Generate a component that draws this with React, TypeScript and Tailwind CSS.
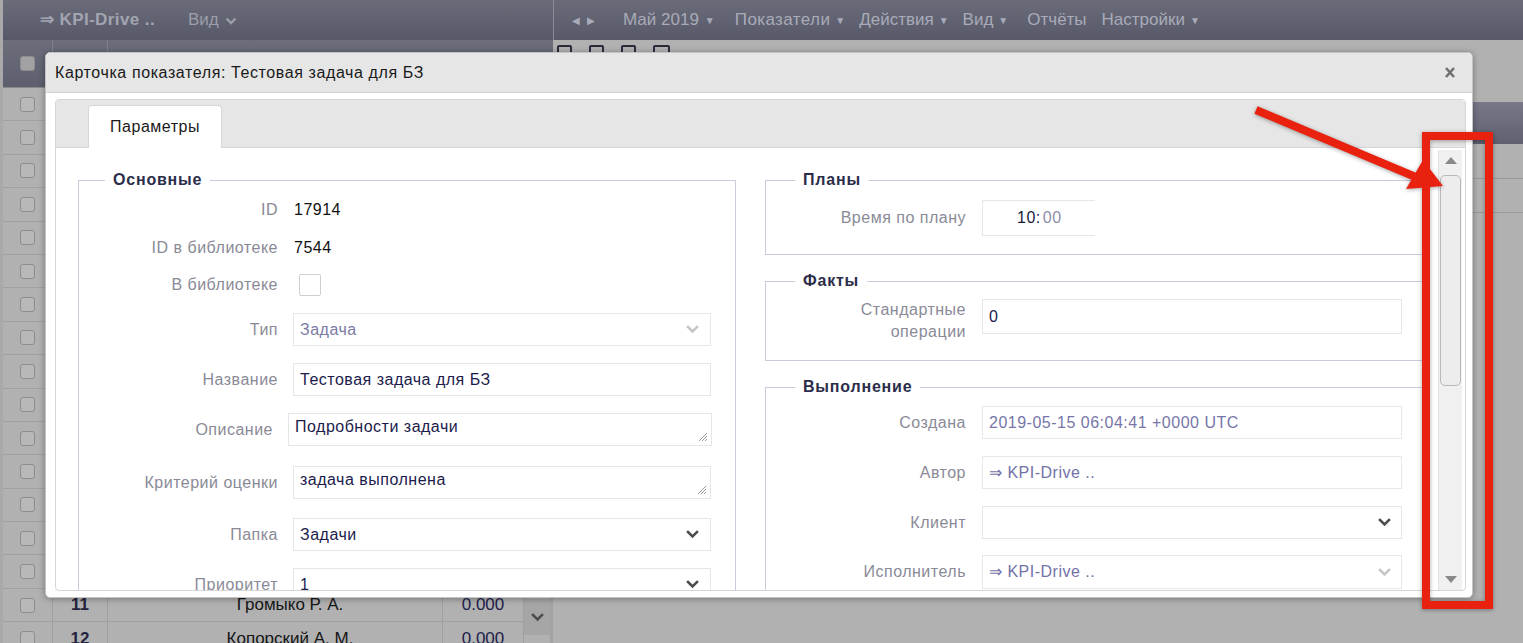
import React from 'react';

const Chevron = ({ light }: { light?: boolean }) => (
  <svg width="13" height="9" viewBox="0 0 13 9" className="shrink-0">
    <path
      d="M2 2 L6.5 6.5 L11 2"
      fill="none"
      stroke={light ? '#c6c6c6' : '#4d4d4d'}
      strokeWidth="2.6"
      strokeLinecap="square"
    />
  </svg>
);

const Grip = () => (
  <svg width="11" height="11" viewBox="0 0 11 11" className="absolute right-[3px] bottom-[3px]">
    <path d="M10 2 L2 10 M10 5 L5 10 M10 8 L8 10" stroke="#9a9a9a" strokeWidth="1" />
  </svg>
);

const Checkbox = ({ dark }: { dark?: boolean }) => (
  <div
    className={`w-[15px] h-[15px] rounded-[3px] border ${
      dark ? 'bg-[#a2a2a4] border-[#8c8c90]' : 'bg-[#b8b8b8] border-[#8d8d8d]'
    }`}
  />
);

function TableRow({ num, name, value }: { num?: string; name?: string; value?: string }) {
  return (
    <div className="flex h-[33.4px] shrink-0 border-b border-[#a0a0a0] items-center text-[17px]">
      <div className="w-[50px] h-full flex items-center justify-center border-r border-[#a0a0a0]">
        <Checkbox />
      </div>
      <div className="w-[55px] h-full flex items-center justify-center border-r border-[#a0a0a0] font-bold text-[#23233f]">
        {num}
      </div>
      <div className="w-[335px] h-full flex items-center justify-center pl-[30px] border-r border-[#a0a0a0] text-[#151515]">
        {name}
      </div>
      <div className="flex-1 h-full flex items-center justify-center text-[#20204a]">{value}</div>
    </div>
  );
}

function LeftRow({
  label,
  children,
  className = '',
  labelW = 'w-[199px]',
}: {
  label: string;
  children: React.ReactNode;
  className?: string;
  labelW?: string;
}) {
  return (
    <div className={`flex items-center ${className}`}>
      <span className={`${labelW} shrink-0 text-right text-[#8a8a97]`}>{label}</span>
      {children}
    </div>
  );
}

function RightRow({ label, children, className = '' }: { label: React.ReactNode; children: React.ReactNode; className?: string }) {
  return (
    <div className={`flex items-center ${className}`}>
      <span className="w-[200px] shrink-0 text-right text-[#8a8a97]">{label}</span>
      {children}
    </div>
  );
}

export default function App() {
  const rows = Array.from({ length: 15 }, (_, i) => i);

  return (
    <div className="relative w-[1523px] h-[643px] overflow-hidden bg-[#b1b1b1] font-['Liberation_Sans',Arial,sans-serif]">
      {/* Background application (dimmed) */}
      <div className="flex h-full">
        {/* Left panel */}
        <div className="w-[553px] shrink-0 flex flex-col border-l-[3px] border-[#a9a9a9]">
          <div className="h-[40px] shrink-0 flex items-center bg-gradient-to-b from-[#6a6c7a] to-[#575969] pl-[37px]">
            <span className="text-[17px] tracking-[0.4px] font-bold text-[#a2a4b0]">⇒ KPI-Drive ..</span>
            <span className="ml-[33px] text-[17px] text-[#9c9eaa]">Вид</span>
            <svg width="12" height="8" viewBox="0 0 12 8" className="ml-[6px] mt-[2px]">
              <path d="M1.5 1.5 L6 6 L10.5 1.5" fill="none" stroke="#9c9eaa" strokeWidth="2.4" />
            </svg>
          </div>
          <div className="h-[48px] shrink-0 flex bg-gradient-to-b from-[#6c6e7c] to-[#5d5f6f] border-b border-[#8a8a8a]">
            <div className="w-[50px] flex items-center justify-center border-r border-[#808090]">
              <Checkbox dark />
            </div>
            <div className="w-[55px] border-r border-[#808090]" />
          </div>
          <div className="flex flex-1 min-h-0">
            <div className="flex-1 flex flex-col">
              {rows.map((i) => (
                <TableRow key={i} />
              ))}
              <TableRow num="11" name="Громыко Р. А." value="0.000" />
              <TableRow num="12" name="Копорский А. М." value="0.000" />
            </div>
            <div className="w-[30px] shrink-0 flex flex-col justify-end pb-[8px] border-l border-[#a0a0a0] border-r-[3px] border-r-[#a3a3a3]">
              <div className="h-[36px] bg-[#a6a6a6] flex items-center justify-center">
                <Chevron />
              </div>
            </div>
          </div>
        </div>

        {/* Right panel */}
        <div className="flex-1 flex flex-col">
          <div className="h-[40px] shrink-0 flex items-center bg-gradient-to-b from-[#6a6c7a] to-[#575969] border-l border-[#8b8b98] pl-[18px] text-[17px] text-[#a9abb8]">
            <span className="text-[10px]">◀</span>
            <span className="ml-[7px] text-[10px]">▶</span>
            <span className="ml-[28px]">Май 2019</span>
            <span className="ml-[6px] text-[10px]">▼</span>
            <span className="ml-[20px] tracking-[0.4px]">Показатели</span>
            <span className="ml-[5px] text-[10px]">▼</span>
            <span className="ml-[14px]">Действия</span>
            <span className="ml-[5px] text-[10px]">▼</span>
            <span className="ml-[14px]">Вид</span>
            <span className="ml-[5px] text-[10px]">▼</span>
            <span className="ml-[19px]">Отчёты</span>
            <span className="ml-[15px]">Настройки</span>
            <span className="ml-[5px] text-[10px]">▼</span>
          </div>
          <div className="h-[62px] shrink-0 flex items-start gap-[17px] pl-[4px] pt-[5px]">
            <div className="w-[15px] h-[15px] border-2 border-[#2a2a3a] rounded-[2px]" />
            <div className="w-[15px] h-[15px] border-2 border-[#2a2a3a] rounded-[2px]" />
            <div className="w-[15px] h-[15px] border-2 border-[#2a2a3a] rounded-[2px]" />
            <div className="w-[17px] h-[15px] border-2 border-[#2a2a3a] rounded-[2px]" />
          </div>
          <div className="h-[42px] shrink-0 bg-gradient-to-b from-[#777988] to-[#5f6171]" />
          <div className="h-[35px] shrink-0 border-b border-[#9a9a9a]" />
          <div className="h-[34px] shrink-0 border-b border-[#9a9a9a]" />
        </div>
      </div>

      {/* Modal */}
      <div className="absolute left-[45px] top-[52px] w-[1428px] h-[546px] flex flex-col bg-white border border-[#c4c4c4] rounded-[5px] shadow-[0_1px_6px_rgba(0,0,0,0.35)] text-[16px] tracking-[0.5px]">
        <div className="h-[40px] shrink-0 flex items-center justify-between bg-[#e6e6e6] border-b border-[#d2d2d2] rounded-t-[5px] pl-[9px] pr-[16px]">
          <span className="text-[#1a1a1a] tracking-[0.6px]">Карточка показателя: Тестовая задача для БЗ</span>
          <svg width="12" height="13" viewBox="0 0 12 13">
            <path d="M2 2 L10 11 M10 2 L2 11" stroke="#707070" strokeWidth="2.6" />
          </svg>
        </div>
        <div className="flex-1 min-h-0 pl-[9px] pr-[6px] pt-[6px] pb-[6px]">
          <div className="h-full flex flex-col border border-[#d6d6d6] rounded-[4px] overflow-hidden">
            <div className="h-[48px] shrink-0 flex items-end bg-[#e6e6e6] border-b border-[#d6d6d6] pl-[32px]">
              <div className="h-[43px] w-[134px] -mb-px flex items-center justify-center bg-white border border-b-0 border-[#d6d6d6] rounded-t-[4px] text-[#1a1a1a]">
                Параметры
              </div>
            </div>
            <div className="flex-1 min-h-0 flex">
              <div className="flex-1 min-w-0 overflow-hidden pl-[22px] pt-[23px] flex items-start gap-[29px]">
                {/* Основные */}
                <fieldset className="w-[658px] shrink-0 border border-[#cbcadb] pb-[40px]">
                  <legend className="ml-[26px] px-[8px] leading-[18px] font-bold tracking-[0.8px] text-[#2b2d4a]">Основные</legend>
                  <LeftRow label="ID" className="h-[30px] mt-[6px]">
                    <span className="ml-[16px] text-[#111]">17914</span>
                  </LeftRow>
                  <LeftRow label="ID в библиотеке" className="h-[30px] mt-[8px]">
                    <span className="ml-[16px] text-[#111]">7544</span>
                  </LeftRow>
                  <LeftRow label="В библиотеке" className="h-[30px] mt-[7px]">
                    <div className="ml-[21px] w-[22px] h-[22px] border border-[#cfcfcf] rounded-[2px]" />
                  </LeftRow>
                  <LeftRow label="Тип" className="h-[33px] mt-[13px]">
                    <div className="ml-[15px] w-[418px] h-[33px] border border-[#e8e8e8] flex items-center justify-between pl-[6px] pr-[11px] text-[#7b7aa5]">
                      Задача
                      <Chevron light />
                    </div>
                  </LeftRow>
                  <LeftRow label="Название" className="h-[33px] mt-[17px]">
                    <div className="ml-[15px] w-[418px] h-[33px] border border-[#e6e6e6] flex items-center pl-[6px] text-[#1c1c4c]">
                      Тестовая задача для БЗ
                    </div>
                  </LeftRow>
                  <LeftRow label="Описание" labelW="w-[194px]" className="h-[33px] mt-[17px]">
                    <div className="relative ml-[15px] w-[424px] h-[33px] border border-[#e6e6e6] pl-[6px] pt-[1px] text-[#1c1c4c]">
                      Подробности задачи
                      <Grip />
                    </div>
                  </LeftRow>
                  <LeftRow label="Критерий оценки" className="h-[33px] mt-[20px]">
                    <div className="relative ml-[15px] w-[418px] h-[33px] border border-[#e6e6e6] pl-[6px] pt-[1px] text-[#1c1c4c]">
                      задача выполнена
                      <Grip />
                    </div>
                  </LeftRow>
                  <LeftRow label="Папка" className="h-[33px] mt-[19px]">
                    <div className="ml-[15px] w-[418px] h-[33px] border border-[#e6e6e6] flex items-center justify-between pl-[6px] pr-[11px] text-[#1c1c4c]">
                      Задачи
                      <Chevron />
                    </div>
                  </LeftRow>
                  <LeftRow label="Приоритет" className="h-[33px] mt-[17px]">
                    <div className="ml-[15px] w-[418px] h-[33px] border border-[#e6e6e6] flex items-center justify-between pl-[6px] pr-[11px] text-[#1c1c4c]">
                      1
                      <Chevron />
                    </div>
                  </LeftRow>
                </fieldset>

                <div className="w-[658px] shrink-0 flex flex-col gap-[17px]">
                  {/* Планы */}
                  <fieldset className="border border-[#cbcadb] pb-[18px]">
                    <legend className="ml-[29px] px-[8px] leading-[18px] font-bold tracking-[0.8px] text-[#2b2d4a]">Планы</legend>
                    <RightRow label="Время по плану" className="h-[36px] mt-[11px]">
                      <div className="ml-[16px] w-[113px] h-[36px] border border-r-0 border-[#e6e6e6] flex items-center justify-start pl-[34px]">
                        <span className="text-[#1a1a3a]">10:</span>
                        <span className="ml-[2px] text-[#8d8daa]">00</span>
                      </div>
                    </RightRow>
                  </fieldset>

                  {/* Факты */}
                  <fieldset className="border border-[#cbcadb] pb-[17px]">
                    <legend className="ml-[29px] px-[8px] leading-[18px] font-bold tracking-[0.8px] text-[#2b2d4a]">Факты</legend>
                    <div className="flex items-start mt-[9px]">
                      <span className="w-[200px] shrink-0 text-right text-[#8a8a97] leading-[22px]">
                        Стандартные
                        <br />
                        операции
                      </span>
                      <div className="ml-[16px] w-[420px] h-[35px] border border-[#e6e6e6] flex items-center pl-[6px] text-[#1c1c4c]">
                        0
                      </div>
                    </div>
                  </fieldset>

                  {/* Выполнение */}
                  <fieldset className="border border-[#cbcadb] pb-[40px]">
                    <legend className="ml-[29px] px-[8px] leading-[18px] font-bold tracking-[0.8px] text-[#2b2d4a]">Выполнение</legend>
                    <RightRow label="Создана" className="h-[33px] mt-[10px]">
                      <div className="ml-[16px] w-[420px] h-[33px] border border-[#e8e8e8] flex items-center pl-[6px] text-[#7676a8]">
                        2019-05-15 06:04:41 +0000 UTC
                      </div>
                    </RightRow>
                    <RightRow label="Автор" className="h-[33px] mt-[17px]">
                      <div className="ml-[16px] w-[420px] h-[33px] border border-[#e8e8e8] flex items-center pl-[6px] text-[#7272a8]">
                        ⇒ KPI-Drive ..
                      </div>
                    </RightRow>
                    <RightRow label="Клиент" className="h-[33px] mt-[17px]">
                      <div className="ml-[16px] w-[420px] h-[33px] border border-[#e6e6e6] flex items-center justify-end pr-[10px]">
                        <Chevron />
                      </div>
                    </RightRow>
                    <RightRow label="Исполнитель" className="h-[34px] mt-[16px]">
                      <div className="ml-[16px] w-[420px] h-[34px] border border-[#e8e8e8] flex items-center justify-between pl-[6px] pr-[10px] text-[#7272a8]">
                        ⇒ KPI-Drive ..
                        <Chevron light />
                      </div>
                    </RightRow>
                  </fieldset>
                </div>
              </div>

              {/* Scrollbar */}
              <div className="w-[24px] shrink-0 mr-[3px] mt-[2px] flex flex-col items-center bg-[#f0f0f0] border-l border-[#e2e2e2]">
                <svg width="12" height="7" viewBox="0 0 12 7" className="mt-[7px]">
                  <path d="M0 7 L6 0 L12 7 Z" fill="#8a8a8a" />
                </svg>
                <div className="mt-[11px] w-[21px] h-[211px] rounded-[5px] border border-[#b9b9b9] bg-[#ededed]" />
                <div className="flex-1" />
                <svg width="12" height="7" viewBox="0 0 12 7" className="mb-[7px]">
                  <path d="M0 0 L12 0 L6 7 Z" fill="#8a8a8a" />
                </svg>
              </div>
            </div>
          </div>
        </div>
      </div>

      {/* Annotation */}
      <svg
        width="1523"
        height="643"
        viewBox="0 0 1523 643"
        className="absolute inset-0 pointer-events-none drop-shadow-[0_1px_2px_rgba(0,0,0,0.35)]"
      >
        <line x1="1256" y1="110" x2="1418" y2="178" stroke="#e9220f" strokeWidth="8" />
        <polygon points="1443,186 1406,189 1423,160" fill="#e9220f" />
        <rect x="1426" y="136" width="63" height="469" fill="none" stroke="#e9220f" strokeWidth="8" />
      </svg>
    </div>
  );
}
